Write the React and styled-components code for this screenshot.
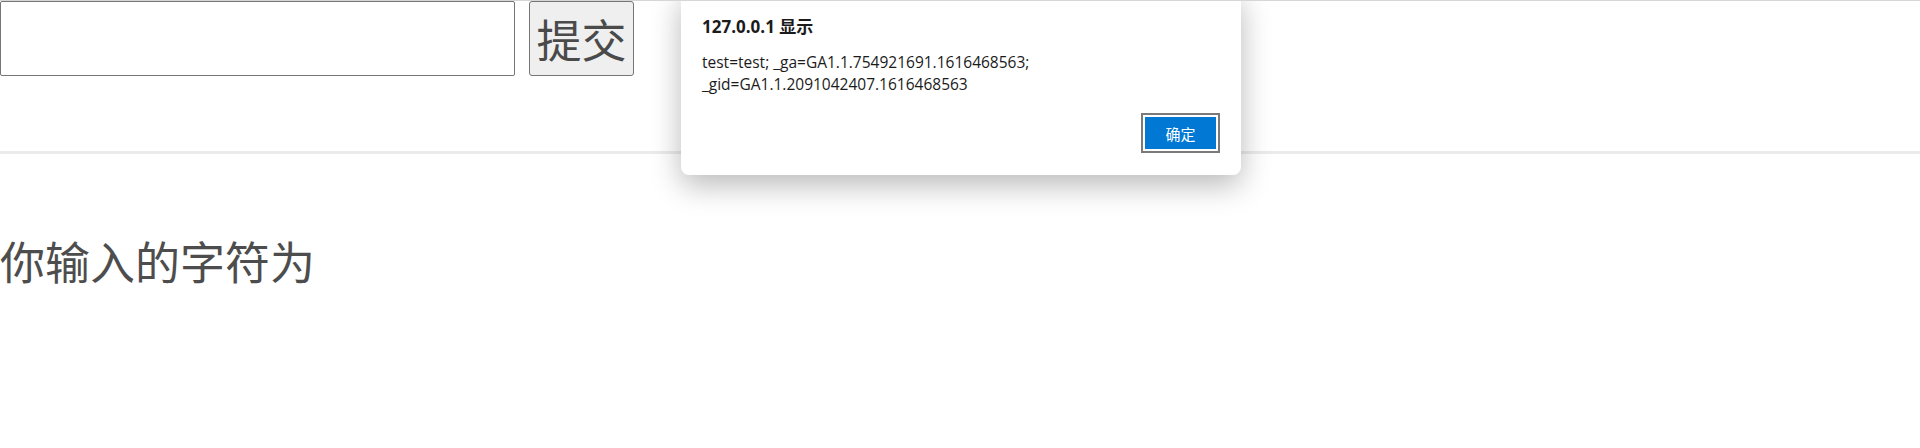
import React from "react";
import styled, { createGlobalStyle } from "styled-components";

const GlobalStyle = createGlobalStyle`
  html, body {
    margin: 0;
    padding: 0;
    background: #ffffff;
  }
  body {
    border-top: 1px solid #d6d6d6;
    font-family: "Noto Sans CJK SC", "Noto Sans", sans-serif;
    color: #4d4d4d;
  }
`;

const Page = styled.div`
  position: relative;
  width: 1920px;
  height: 447px;
  overflow: hidden;
`;

const Form = styled.form`
  display: flex;
  align-items: flex-start;
  gap: 14px;
`;

const Input = styled.input`
  box-sizing: border-box;
  width: 515px;
  height: 75px;
  margin: 0;
  padding: 0 4px;
  border: 1px solid #767676;
  border-radius: 2px;
  font-size: 40px;
  font-family: inherit;
  background: #fff;
  outline: none;
`;

const SubmitBtn = styled.button`
  box-sizing: border-box;
  width: 105px;
  height: 75px;
  margin: 0;
  padding: 0;
  border: 1px solid #767676;
  border-radius: 3px;
  background: #efefef;
  color: #4a4a4a;
  font-family: inherit;
  font-size: 45px;
  line-height: 1;
`;

const Divider = styled.div`
  margin-top: 75px;
  height: 3px;
  background: #ebebeb;
`;

const Result = styled.h1`
  margin: 74px 0 0;
  font-size: 45px;
  font-weight: 400;
  line-height: 65px;
  color: #4d4d4d;
`;

const Dialog = styled.div`
  position: absolute;
  left: 681px;
  top: -10px;
  width: 560px;
  box-sizing: border-box;
  padding: 25px 21px 22px 21px;
  background: #fff;
  border-radius: 8px;
  box-shadow: 0 10px 30px rgba(0, 0, 0, 0.28);
  display: flex;
  flex-direction: column;
  font-family: "Open Sans", "Noto Sans CJK SC", sans-serif;
  color: #1b1b1b;
`;

const Title = styled.div`
  font-size: 17px;
  font-weight: 700;
  line-height: 22px;
`;

const Message = styled.div`
  margin-top: 13px;
  font-size: 15.5px;
  line-height: 22px;
  white-space: nowrap;
`;

const Actions = styled.div`
  display: flex;
  justify-content: flex-end;
  margin-top: 18px;
`;

const OkBtn = styled.button`
  box-sizing: border-box;
  width: 79px;
  height: 40px;
  padding: 0;
  border: 2px solid #7a7a7a;
  background: #0078d4;
  box-shadow: inset 0 0 0 2px #ffffff;
  color: #fff;
  font-family: "Noto Sans CJK SC", sans-serif;
  font-size: 15px;
`;

export default function App() {
  return (
    <Page>
      <GlobalStyle />
      <Form onSubmit={(e) => e.preventDefault()}>
        <Input type="text" />
        <SubmitBtn type="submit">提交</SubmitBtn>
      </Form>
      <Divider />
      <Result>你输入的字符为</Result>
      <Dialog>
        <Title>127.0.0.1 显示</Title>
        <Message>
          test=test; _ga=GA1.1.754921691.1616468563;
          <br />
          _gid=GA1.1.2091042407.1616468563
        </Message>
        <Actions>
          <OkBtn>确定</OkBtn>
        </Actions>
      </Dialog>
    </Page>
  );
}
